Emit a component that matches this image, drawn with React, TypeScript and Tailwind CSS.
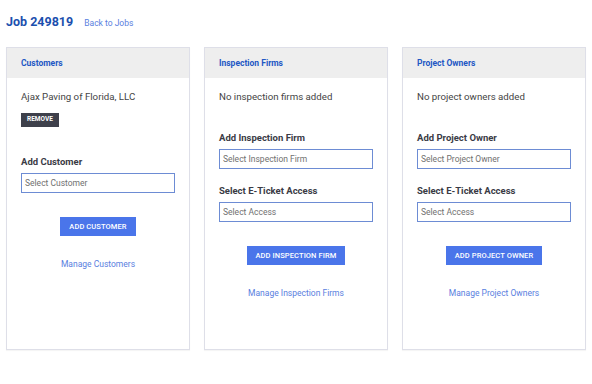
import React from "react";

function Field({ label, placeholder, className = "" }: { label: string; placeholder: string; className?: string }) {
  return (
    <div className={className}>
      <div className="text-[9.5px] leading-[12px] font-bold text-[#3a3b45]">{label}</div>
      <div className="mt-[5px] h-[20px] w-[154px] border border-[#6d8cd4] flex items-center px-[3px] text-[8.5px] text-[#707070]">
        {placeholder}
      </div>
    </div>
  );
}

function Card({ title, children }: { title: string; children: React.ReactNode }) {
  return (
    <div className="h-[303px] border border-[#dedfe8] bg-white shadow-[0_1px_1px_rgba(0,0,0,0.04)] flex flex-col">
      <div className="h-[30px] bg-[#eeeeee] flex items-center pl-[14px] text-[8.5px] font-bold text-[#2257c4]">{title}</div>
      <div className="pl-[14px] pt-[12px]">{children}</div>
    </div>
  );
}

function ActionButton({ text, mt }: { text: string; mt: string }) {
  return (
    <div className={`flex flex-col items-center ${mt}`}>
      <div className="h-[19px] px-[9px] bg-[#4a75ea] text-white text-[7.5px] font-medium flex items-center tracking-[0.1px]">{text}</div>
    </div>
  );
}

export default function App() {
  return (
    <div className="w-[592px] h-[384px] bg-white" style={{ fontFamily: "Roboto, 'Liberation Sans', sans-serif" }}>
      <div className="flex items-baseline px-[6px] pt-[13px] gap-[11px]">
        <h1 className="text-[12.5px] font-bold text-[#1b4fae] leading-[18px]">Job 249819</h1>
        <span className="text-[8.5px] text-[#5a80e0]">Back to Jobs</span>
      </div>
      <div className="grid grid-cols-3 gap-[14px] px-[6px] mt-[16px]">
        <Card title="Customers">
          <div className="pr-[14px]">
            <div className="text-[9.7px] leading-[14px] text-[#444]">Ajax Paving of Florida, LLC</div>
            <div className="mt-[8px] inline-flex h-[14px] px-[6px] items-center bg-[#3e404b] text-white text-[6.5px] font-bold">REMOVE</div>
            <Field className="mt-[28px]" label="Add Customer" placeholder="Select Customer" />
            <ActionButton text="ADD CUSTOMER" mt="mt-[24px]" />
            <div className="mt-[22px] text-center text-[8.5px] leading-[12px] text-[#5a80e0]">Manage Customers</div>
          </div>
        </Card>
        <Card title="Inspection Firms">
          <div className="pr-[14px]">
            <div className="text-[9.7px] leading-[14px] text-[#444]">No inspection firms added</div>
            <Field className="mt-[28px]" label="Add Inspection Firm" placeholder="Select Inspection Firm" />
            <Field className="mt-[16px]" label="Select E-Ticket Access" placeholder="Select Access" />
            <ActionButton text="ADD INSPECTION FIRM" mt="mt-[24px]" />
            <div className="mt-[22px] text-center text-[8.5px] leading-[12px] text-[#5a80e0]">Manage Inspection Firms</div>
          </div>
        </Card>
        <Card title="Project Owners">
          <div className="pr-[14px]">
            <div className="text-[9.7px] leading-[14px] text-[#444]">No project owners added</div>
            <Field className="mt-[28px]" label="Add Project Owner" placeholder="Select Project Owner" />
            <Field className="mt-[16px]" label="Select E-Ticket Access" placeholder="Select Access" />
            <ActionButton text="ADD PROJECT OWNER" mt="mt-[24px]" />
            <div className="mt-[22px] text-center text-[8.5px] leading-[12px] text-[#5a80e0]">Manage Project Owners</div>
          </div>
        </Card>
      </div>
    </div>
  );
}
